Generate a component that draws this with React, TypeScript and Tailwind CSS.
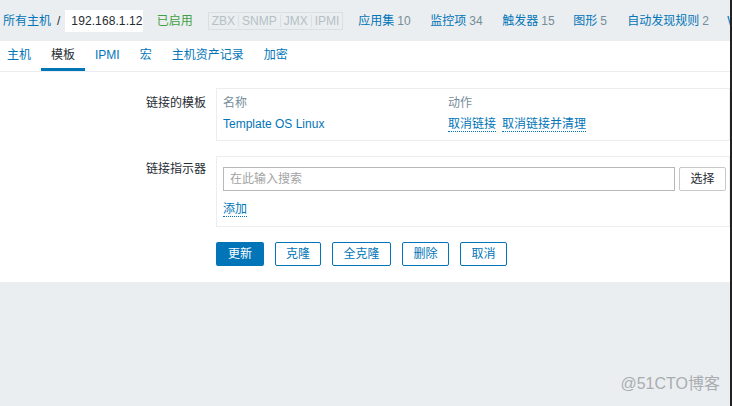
import React from "react";

const font = "font-['Liberation_Sans','Noto_Sans_CJK_SC',sans-serif]";

const counts = [
  { label: "应用集", n: "10", w: "w-[72px]" },
  { label: "监控项", n: "34", w: "w-[72px]" },
  { label: "触发器", n: "15", w: "w-[71px]" },
  { label: "图形", n: "5", w: "w-[54px]" },
  { label: "自动发现规则", n: "2", w: "w-[100px]" },
];

const tabs = ["主机", "模板", "IPMI", "宏", "主机资产记录", "加密"];

const App: React.FC = () => {
  return (
    <div className={`w-[732px] h-[406px] flex flex-col bg-[#ebeef0] text-[12px] text-[#1f2c33] overflow-hidden border-r-2 border-[#222] ${font}`}>
      {/* Top bar */}
      <div className="h-[41px] flex items-center pl-[3px] whitespace-nowrap">
        <span className="text-[#0275b8]">所有主机</span>
        <span className="ml-[6px] text-[#1f2c33]">/</span>
        <span className="ml-[5px] h-[22px] w-[82px] bg-white flex items-center pl-[6px] tracking-[0.1px]">192.168.1.12</span>
        <span className="ml-[14px] text-[#429e47]">已启用</span>
        <span className="ml-[15px] flex items-center h-[18px] border border-[#d9dfe2] text-[12px] text-[#b5c0c6] leading-none">
          <span className="px-[3px]">ZBX</span>
          <span className="px-[3px] border-l border-[#d9dfe2]">SNMP</span>
          <span className="px-[3px] border-l border-[#d9dfe2]">JMX</span>
          <span className="px-[3px] border-l border-[#d9dfe2]">IPMI</span>
        </span>
        <div className="ml-[15px] flex items-center">
          {counts.map((c) => (
            <span key={c.label} className={`${c.w} shrink-0`}>
              <span className="text-[#0275b8]">{c.label}</span>
              <span className="ml-[3px] text-[#768d99]">{c.n}</span>
            </span>
          ))}
          <span className="text-[#0275b8]">W</span>
        </div>
      </div>

      {/* Tabs */}
      <div className="h-[31px] bg-white flex items-stretch border-b border-[#ebeef0]">
        <div className="flex items-stretch -ml-[3px]">
          {tabs.map((t) => (
            <span
              key={t}
              className={`px-[10px] flex items-center border-b-[3px] ${
                t === "模板" ? "border-[#0275b8] text-[#1f2c33]" : "border-transparent text-[#0275b8]"
              }`}
            >
              {t}
            </span>
          ))}
        </div>
      </div>

      {/* Form */}
      <div className="bg-white pt-[16px] pb-[16px]">
        <div className="flex">
          <div className="w-[206px] shrink-0 text-right pt-[6px]">链接的模板</div>
          <div className="ml-[10px] flex-1 border border-[#ebeef0] pl-[6px] pt-[4px] pb-[5px]">
            <div className="flex h-[20px] items-center text-[#768d99]">
              <span className="w-[225px]">名称</span>
              <span>动作</span>
            </div>
            <div className="flex h-[22px] items-center">
              <span className="w-[225px] text-[#0275b8]">Template OS Linux</span>
              <span className="text-[#0275b8] border-b border-dotted border-[#0275b8] leading-[14px]">取消链接</span>
              <span className="ml-[6px] text-[#0275b8] border-b border-dotted border-[#0275b8] leading-[14px]">取消链接并清理</span>
            </div>
          </div>
        </div>

        <div className="flex mt-[15px]">
          <div className="w-[206px] shrink-0 text-right pt-[4px]">链接指示器</div>
          <div className="ml-[10px] flex-1 border border-[#ebeef0] pl-[6px] pr-[3px] pt-[10px] pb-[9px]">
            <div className="flex items-center">
              <div className="flex-1 h-[24px] border border-[#b8b8b8] flex items-center pl-[6px] text-[#a3a3a3]">
                在此输入搜索
              </div>
              <button className="ml-[4px] w-[47px] h-[24px] border border-[#c8c8c8] rounded-[2px] bg-white text-[#1f2c33]">
                选择
              </button>
            </div>
            <div className="mt-[10px] h-[16px] flex items-center">
              <span className="text-[#0275b8] border-b border-dotted border-[#0275b8] leading-[14px]">添加</span>
            </div>
          </div>
        </div>

        <div className="flex mt-[15px] ml-[216px] gap-[11px]">
          <button className="w-[48px] h-[24px] rounded-[2px] bg-[#0275b8] text-white">更新</button>
          <button className="w-[46px] h-[24px] rounded-[2px] border border-[#0275b8] text-[#0275b8] bg-white">克隆</button>
          <button className="w-[59px] h-[24px] rounded-[2px] border border-[#0275b8] text-[#0275b8] bg-white">全克隆</button>
          <button className="w-[47px] h-[24px] rounded-[2px] border border-[#0275b8] text-[#0275b8] bg-white">删除</button>
          <button className="w-[47px] h-[24px] rounded-[2px] border border-[#0275b8] text-[#0275b8] bg-white">取消</button>
        </div>
      </div>

      {/* Gray area */}
      <div className="flex-1 flex items-end justify-end pr-[10px] pb-[10px]">
        <span className="text-[16px] text-[#a9adb0]">@51CTO博客</span>
      </div>
    </div>
  );
};

export default App;
